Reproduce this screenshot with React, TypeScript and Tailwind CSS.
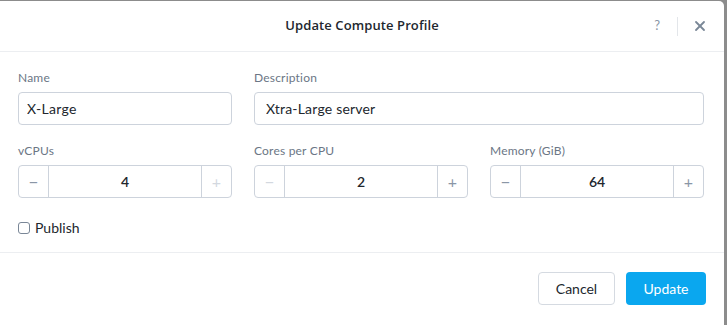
import { X } from 'lucide-react';

const font = { fontFamily: 'Lato, "Open Sans", Arial, sans-serif' };

function Stepper({
  value,
  minusDisabled,
  plusDisabled,
}: {
  value: string;
  minusDisabled?: boolean;
  plusDisabled?: boolean;
}) {
  return (
    <div className="flex h-[33px] rounded-[4px] border border-[#cdd3dc] bg-white">
      <button
        className={`flex w-[30px] items-center justify-center border-r border-[#cdd3dc] text-[17px] leading-none ${
          minusDisabled ? 'text-[#d3d8df]' : 'text-[#8a96a6]'
        }`}
      >
        −
      </button>
      <div className="flex flex-1 items-center justify-center text-[14px] font-semibold text-[#22272e]">{value}</div>
      <button
        className={`flex w-[30px] items-center justify-center border-l border-[#cdd3dc] text-[16px] leading-none ${
          plusDisabled ? 'text-[#d3d8df]' : 'text-[#8a96a6]'
        }`}
      >
        +
      </button>
    </div>
  );
}

function Field({ label, children, className = '' }: { label: string; children: React.ReactNode; className?: string }) {
  return (
    <div className={className}>
      <div className="mb-[7px] h-[14px] text-[12px] leading-[14px] tracking-[0.2px] text-[#6b7685]">{label}</div>
      {children}
    </div>
  );
}

export default function App() {
  return (
    <div className="h-[325px] w-[727px] overflow-hidden bg-[#8c8c8c] pt-px" style={font}>
      <div className="flex h-[324px] w-[724px] flex-col rounded-tr-[5px] bg-white">
        {/* Header */}
        <div className="relative flex h-[51px] items-center justify-center border-b border-[#eceef1]">
          <h2 className="font-['Open_Sans',sans-serif] text-[13px] font-semibold tracking-[0.1px] text-[#22272e]">
            Update Compute Profile
          </h2>
          <div className="absolute right-[16px] top-0 flex h-full items-center">
            <span className="text-[13px] text-[#8a96a6]">?</span>
            <div className="ml-[17px] mr-[14px] h-[19px] w-px bg-[#e3e6ea]" />
            <X size={16} strokeWidth={2.75} className="text-[#7a8797]" />
          </div>
        </div>

        {/* Body */}
        <div className="grid grid-cols-3 gap-x-[22px] gap-y-[19px] pl-[18px] pr-[20px] pt-[19px]">
          <Field label="Name">
            <input
              readOnly
              value="X-Large"
              className="h-[33px] w-full rounded-[4px] border border-[#cdd3dc] px-[8px] text-[14px] tracking-[0.3px] text-[#22272e] outline-none"
            />
          </Field>
          <Field label="Description" className="col-span-2">
            <input
              readOnly
              value="Xtra-Large server"
              className="h-[33px] w-full rounded-[4px] border border-[#cdd3dc] px-[11px] text-[14px] tracking-[0.2px] text-[#22272e] outline-none"
            />
          </Field>
          <Field label="vCPUs">
            <Stepper value="4" plusDisabled />
          </Field>
          <Field label="Cores per CPU">
            <Stepper value="2" minusDisabled />
          </Field>
          <Field label="Memory (GiB)">
            <Stepper value="64" />
          </Field>
        </div>

        <label className="mt-[19px] flex items-center gap-[5px] px-[18px] text-[14px] text-[#22272e]">
          <span className="h-[12px] w-[12px] rounded-[3px] border border-[#7a8797]" />
          Publish
        </label>

        {/* Footer */}
        <div className="mt-[14px] flex flex-1 items-start justify-end gap-[11px] border-t border-[#eceef1] pr-[18px] pt-[19px]">
          <button className="h-[33px] w-[77px] rounded-[4px] border border-[#d5dae1] bg-white text-[14px] text-[#22272e]">
            Cancel
          </button>
          <button className="h-[33px] w-[80px] rounded-[4px] bg-[#0aa7ef] text-[14px] text-white">Update</button>
        </div>
      </div>
    </div>
  );
}
